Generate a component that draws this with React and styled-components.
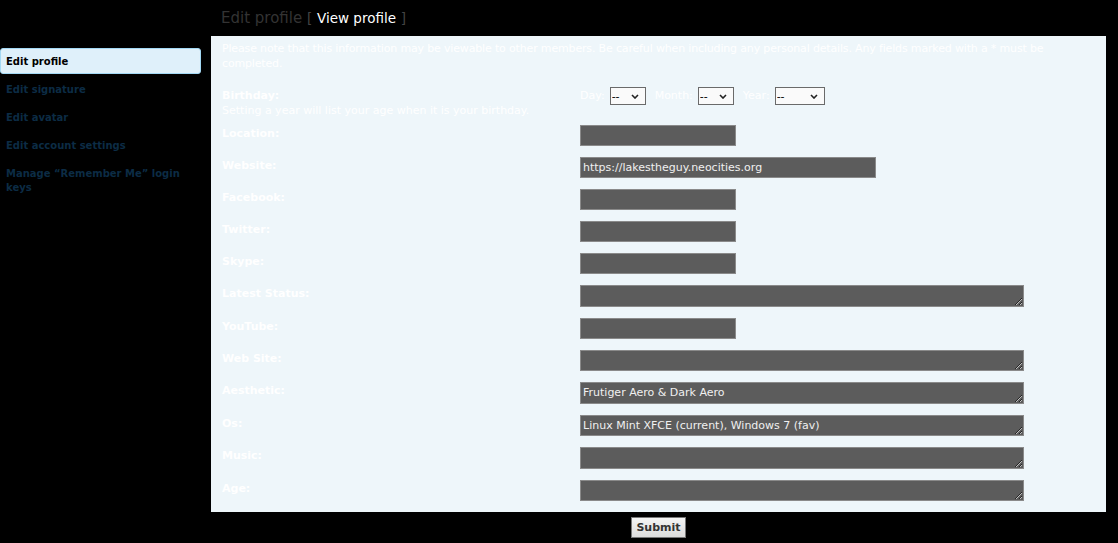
import React from 'react';
import styled, { createGlobalStyle } from 'styled-components';

const GlobalStyle = createGlobalStyle`
body {
  margin: 0;
  background-color: #000;
  font-family: "DejaVu Sans", Verdana, sans-serif;
  font-size: 11px;
}
`;

const Page = styled.div`
display: flex;
align-items: flex-start;
width: 1118px;
`;

const Sidebar = styled.ul`
list-style: none;
margin: 48px 0 0 0;
padding: 0;
width: 201px;
flex-shrink: 0;
`;

const NavItem = styled.li`
box-sizing: border-box;
min-height: 26px;
margin-bottom: 2px;
padding: 6px 5px 4px 5px;
line-height: 14px;
font-weight: bold;
font-size: 10px;
border: 1px solid ${p => (p.$active ? '#a3d8f4' : 'transparent')};
border-radius: 3px;
background-color: ${p => (p.$active ? '#dff0fa' : 'transparent')};
color: ${p => (p.$active ? '#000' : '#0c2c45')};
`;

const Main = styled.div`
margin-left: 10px;
width: 895px;
`;

const Heading = styled.h2`
margin: 0;
padding-left: 10px;
height: 36px;
line-height: 36px;
font-size: 15px;
font-weight: normal;
color: #333;
`;

const Bracket = styled.span`
color: #444;
font-size: 13.5px;
`;

const HeadLink = styled.span`
color: #fff;
font-size: 13.5px;
`;

const Panel = styled.div`
background-color: #eef6fa;
padding: 5px 11px 11px 11px;
color: #fff;
font-size: 11px;
`;

const Notice = styled.p`
margin: 0 0 16px 0;
line-height: 15px;
letter-spacing: -0.16px;
`;

const Row = styled.div`
display: flex;
align-items: flex-start;
margin-bottom: ${p => (p.$gap !== undefined ? p.$gap : 11)}px;
&:last-child {
  margin-bottom: 0;
}
`;

const Label = styled.div`
width: 358px;
flex-shrink: 0;
padding-top: 1px;
line-height: 15px;
`;

const LabelTitle = styled.div`
font-weight: bold;
`;

const Hint = styled.div``;

const Field = styled.div`
display: flex;
align-items: center;
gap: 5px;
`;

const DateLabel = styled.span`
line-height: 18px;
margin-left: ${p => (p.$first ? 0 : 4)}px;
`;

const SelectWrap = styled.span`
position: relative;
display: inline-block;
height: 18px;
`;

const Select = styled.select`
appearance: none;
box-sizing: border-box;
display: block;
height: 18px;
width: ${p => p.$w}px;
margin: 0;
padding: 0 0 0 1px;
border: 1px solid #6a6a6a;
border-radius: 0;
background-color: #fafafa;
color: #000;
font-family: "DejaVu Sans", Verdana, sans-serif;
font-size: 11px;
`;

const Chevron = styled.svg`
position: absolute;
right: 7px;
top: 7px;
pointer-events: none;
`;

const Input = styled.input`
box-sizing: border-box;
width: ${p => p.$w}px;
height: 21px;
margin: 0;
padding: 0 2px;
border: 1px solid #8a8a8a;
background-color: #5c5c5c;
color: #f0f0f0;
font-family: "DejaVu Sans", Verdana, sans-serif;
font-size: 11px;
outline: none;
`;

const TextArea = styled.textarea`
box-sizing: border-box;
display: block;
width: 444px;
height: 21.5px;
margin: 0;
padding: 3px 2px 0 2px;
border: 1px solid #8a8a8a;
background-color: #5c5c5c;
color: #f0f0f0;
font-family: "DejaVu Sans", Verdana, sans-serif;
font-size: 11px;
line-height: 14px;
overflow: hidden;
outline: none;
`;

const Footer = styled.div`
display: flex;
justify-content: center;
padding-top: 5px;
`;

const Submit = styled.button`
height: 21px;
width: 55px;
padding: 0;
border: 1px solid #777;
background: linear-gradient(#f4f4f4, #dcdcdc);
color: #333;
font-family: "DejaVu Sans", Verdana, sans-serif;
font-size: 11px;
font-weight: bold;
cursor: pointer;
`;

const DateSelect = ({ w }) => (
  <SelectWrap>
    <Select $w={w} defaultValue="--">
      <option>--</option>
    </Select>
    <Chevron width="8" height="5" viewBox="0 0 8 5">
      <path d="M1 1 L4 4 L7 1" stroke="#222" strokeWidth="1.6" fill="none" />
    </Chevron>
  </SelectWrap>
);

const fields = [
  { label: 'Location:', type: 'input', w: 156 },
  { label: 'Website:', type: 'input', w: 296, value: 'https://lakestheguy.neocities.org' },
  { label: 'Facebook:', type: 'input', w: 156 },
  { label: 'Twitter:', type: 'input', w: 156 },
  { label: 'Skype:', type: 'input', w: 156 },
  { label: 'Latest Status:', type: 'text' },
  { label: 'YouTube:', type: 'input', w: 156 },
  { label: 'Web Site:', type: 'text' },
  { label: 'Aesthetic:', type: 'text', value: 'Frutiger Aero & Dark Aero' },
  { label: 'Os:', type: 'text', value: 'Linux Mint XFCE (current), Windows 7 (fav)' },
  { label: 'Music:', type: 'text' },
  { label: 'Age:', type: 'text' },
];

const navItems = [
  'Edit profile',
  'Edit signature',
  'Edit avatar',
  'Edit account settings',
  'Manage \u201CRemember Me\u201D login keys',
];

function App() {
  return (
    <Page>
      <GlobalStyle />
      <Sidebar>
        {navItems.map((item, i) => (
          <NavItem key={item} $active={i === 0}>{item}</NavItem>
        ))}
      </Sidebar>
      <Main>
        <Heading>
          Edit profile <Bracket>[</Bracket> <HeadLink>View profile</HeadLink> <Bracket>]</Bracket>
        </Heading>
        <form>
          <Panel>
            <Notice>
              Please note that this information may be viewable to other members. Be careful when including any personal details. Any fields marked with a * must be completed.
            </Notice>
            <Row $gap={7}>
              <Label>
                <LabelTitle>Birthday:</LabelTitle>
                <Hint>Setting a year will list your age when it is your birthday.</Hint>
              </Label>
              <Field>
                <DateLabel $first>Day:</DateLabel>
                <DateSelect w={36} />
                <DateLabel>Month:</DateLabel>
                <DateSelect w={36} />
                <DateLabel>Year:</DateLabel>
                <DateSelect w={50} />
              </Field>
            </Row>
            {fields.map(f => (
              <Row key={f.label}>
                <Label>
                  <LabelTitle>{f.label}</LabelTitle>
                </Label>
                <Field>
                  {f.type === 'input' ? (
                    <Input type="text" $w={f.w} defaultValue={f.value || ''} />
                  ) : (
                    <TextArea rows={1} defaultValue={f.value || ''} />
                  )}
                </Field>
              </Row>
            ))}
          </Panel>
          <Footer>
            <Submit type="submit">Submit</Submit>
          </Footer>
        </form>
      </Main>
    </Page>
  );
}

export default App;
